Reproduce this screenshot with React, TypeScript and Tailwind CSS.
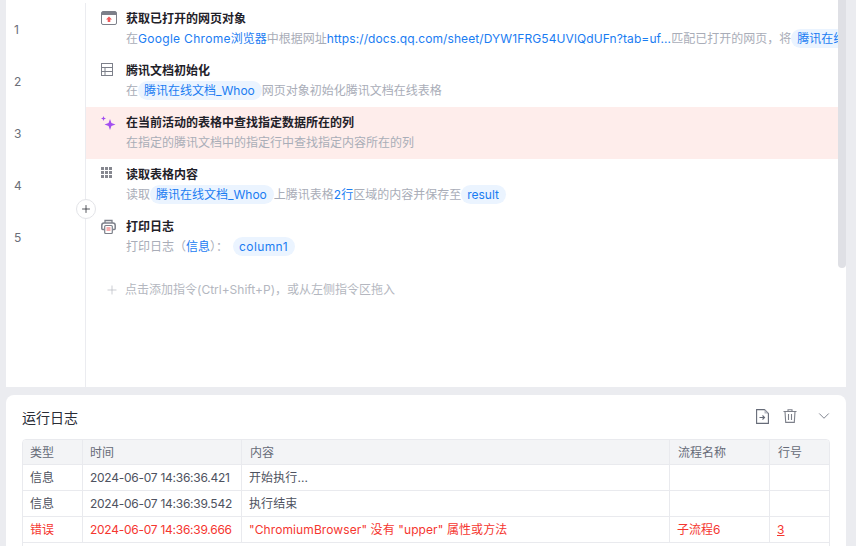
import { ChevronDownIcon, PlusIcon } from "lucide-react";

const FONT = "font-['Inter','Noto_Sans_CJK_SC',sans-serif]";

function Chip({ children }: { children: React.ReactNode }) {
  return <span className="inline-block h-[19px] shrink-0 rounded-[10px] bg-[#ebf4ff] pl-1.5 pr-[7px] leading-[19px] text-[#1a7cf2]">{children}</span>;
}

function Blue({ children }: { children: React.ReactNode }) {
  return <span className="text-[#1a7cf2]">{children}</span>;
}

function WebIcon() {
  return (
    <svg width="16" height="14" viewBox="0 0 16 14">
      <rect x="0.5" y="0.5" width="15" height="13" rx="1.5" fill="#fff" stroke="#7d808a" />
      <rect x="1" y="1" width="14" height="3" fill="#7d808a" />
      <path d="M8 5.500l3 3H9.300v2.500H6.700V8.500H5z" fill="#f0595b" />
    </svg>
  );
}

function SheetIcon() {
  return (
    <svg width="12" height="13" viewBox="0 0 12 13" fill="none" stroke="#7d808a">
      <rect x="0.500" y="0.500" width="11" height="12" />
      <path d="M.5 4.500h11M.5 8.500h11M4 4.500v8" />
    </svg>
  );
}

function SparkIcon() {
  return (
    <svg width="15" height="16" viewBox="0 0 15 16" fill="#a34ff0">
      <path d="M9 4l1.400 4.100L14.500 9.500l-4.100 1.400L9 15l-1.400-4.100L3.500 9.500l4.100-1.400z" />
      <path d="M2.500 1l.7 1.800L5 3.500l-1.800.7L2.500 6l-.7-1.800L0 3.500l1.800-.7z" />
    </svg>
  );
}

function GridIcon() {
  return (
    <svg width="11" height="11" viewBox="0 0 11 11" fill="#85878f">
      {[0, 4, 8].flatMap((y) => [0, 4, 8].map((x) => <rect key={`${x}-${y}`} x={x} y={y} width="3" height="3" />))}
    </svg>
  );
}

function PrintIcon() {
  return (
    <svg width="15" height="15" viewBox="0 0 15 15" fill="none">
      <path d="M4 4V1.500h7V4" stroke="#7d808a" strokeWidth="1.300" />
      <path d="M3.500 10.500H1.800C1.200 10.500.8 10 .8 9.500V6.500C.8 5 2 4 3 4h9c1 0 2.200 1 2.200 2.500v3c0 .5-.4 1-1 1h-1.700" stroke="#7d808a" strokeWidth="1.500" />
      <rect x="3.700" y="6.500" width="7.600" height="8" rx="1" fill="#fff" stroke="#7d808a" strokeWidth="1.200" />
      <path d="M5.500 9h4M5.500 11h4" stroke="#f0595b" />
    </svg>
  );
}

function ExportIcon() {
  return (
    <svg width="13" height="15" viewBox="0 0 13 15" fill="none" stroke="#666b78" strokeWidth="1.100">
      <path d="M8.500 .6H.6v13.800h11.800V4.500z" />
      <path d="M8.500 .6v3.900h3.900z" fill="#b8bbc4" stroke="none" />
      <path d="M3.500 8.500h5M6.500 6.500l2 2-2 2" />
    </svg>
  );
}

function BinIcon() {
  return (
    <svg width="14" height="14" viewBox="0 0 14 14" fill="none" stroke="#7d808a" strokeWidth="1.100">
      <path d="M.5 2.500h13M5 2.500V.8h4v1.700" />
      <path d="M2 2.500l.7 10.900h8.600L12 2.500" />
      <path d="M5.500 5v6M8.500 5v6" />
    </svg>
  );
}

const steps = [
  {
    no: 1,
    icon: <WebIcon />,
    title: "获取已打开的网页对象",
    desc: (
      <>
        在<Blue><span className="tracking-[0.3px]">Google Chrome</span>浏览器</Blue>中根据网址<Blue><span className="tracking-[0.1px]">https://docs.qq.com/sheet/DYW1FRG54UVlQdUFn?tab=uf...</span></Blue>匹配已打开的网页，将<Chip>腾讯在线文档_Whoo</Chip>
      </>
    ),
  },
  {
    no: 2,
    icon: <SheetIcon />,
    title: "腾讯文档初始化",
    desc: (
      <>
        在<Chip>腾讯在线文档_Whoo</Chip>网页对象初始化腾讯文档在线表格
      </>
    ),
  },
  { no: 3, icon: <SparkIcon />, title: "在当前活动的表格中查找指定数据所在的列", desc: <>在指定的腾讯文档中的指定行中查找指定内容所在的列</>, error: true },
  {
    no: 4,
    icon: <GridIcon />,
    title: "读取表格内容",
    desc: (
      <>
        读取<Chip>腾讯在线文档_Whoo</Chip>上腾讯表格<Blue>2行</Blue>区域的内容并保存至<Chip>result</Chip>
      </>
    ),
  },
  {
    no: 5,
    icon: <PrintIcon />,
    title: "打印日志",
    desc: (
      <>
        打印日志（<Blue>信息</Blue>）：<span className="ml-[5px]" /><Chip><span className="tracking-[0.4px]">column1</span></Chip>
      </>
    ),
  },
];

const logs = [
  { type: "信息", time: "2024-06-07 14:36:36.421", text: "开始执行...", flow: "", line: "" },
  { type: "信息", time: "2024-06-07 14:36:39.542", text: "执行结束", flow: "", line: "" },
  { type: "错误", time: "2024-06-07 14:36:39.666", text: '"ChromiumBrowser" 没有 "upper" 属性或方法', flow: "子流程6", line: "3", error: true },
];

export default function App() {
  return (
    <main className={`relative flex h-[546px] w-[856px] flex-col overflow-hidden bg-[#ebecf0] pl-1.5 pr-2.5 text-[12px] ${FONT}`}>
      <section className="flex h-[387px] shrink-0 overflow-hidden bg-white pr-2">
        <div className="flex min-w-0 flex-1 pt-[3px]">
          <div className="w-20 shrink-0 border-r border-[#ebecf0] pl-2 text-[#6b6e78]">
            {steps.map((s) => (
              <div key={s.no} className="flex h-[52px] items-center pt-0.5">
                {s.no}
              </div>
            ))}
          </div>
          <div className="relative min-w-0 flex-1">
            {steps.map((s) => (
              <div key={s.no} className={`flex h-[52px] overflow-hidden pl-3.5 ${s.error ? "bg-[#feedeb]" : ""}`}>
                <div className="flex w-[26px] shrink-0 items-start pl-px pt-2">{s.icon}</div>
                <div className="min-w-0 pt-1.5">
                  <div className="h-[19px] whitespace-nowrap font-bold leading-5 text-[#1f2129]">{s.title}</div>
                  <div className="h-[21px] whitespace-nowrap leading-[21px] text-[#a9adb8]">{s.desc}</div>
                </div>
              </div>
            ))}
            <div className="flex h-[54px] items-center pl-[19px] text-[#b4b7c0]">
              <PlusIcon className="mr-1.5 size-3.5" strokeWidth={1.200} />
              点击添加指令(Ctrl+Shift+P)，或从左侧指令区拖入
            </div>
            <div className="absolute left-[-10px] top-[196px] flex size-5 items-center justify-center rounded-full border border-[#e3e4e8] bg-white text-[#1f2129]">
              <PlusIcon className="size-3" strokeWidth={1.500} />
            </div>
          </div>
        </div>
      </section>
      <div className="absolute left-[838px] top-0 h-[268px] w-2 rounded-b-sm bg-[#dfe0e5]" />

      <section className="mt-2 flex-1 rounded-t-lg bg-white px-4 pt-[5px]">
        <div className="flex h-8 items-center justify-between">
          <h2 className="pt-0.5 text-[14px] text-[#2a2d36]">运行日志</h2>
          <div className="flex items-center text-[#666b78]">
            <ExportIcon />
            <div className="ml-3.5">
              <BinIcon />
            </div>
            <ChevronDownIcon className="ml-[18px] mr-[-3px] size-[18px]" strokeWidth={1.100} />
          </div>
        </div>
        <div className="mt-[7px] w-[808px] overflow-hidden rounded-t border border-[#e9eaee] text-[#4e5260]">
          <div className="grid h-6 grid-cols-[60px_159px_428px_100px_1fr] items-center bg-[#f3f4f6] text-[#666b78]">
            {["类型", "时间", "内容", "流程名称", "行号"].map((h) => (
              <div key={h} className="flex h-full items-center border-r border-[#e9eaee] pl-[7px] pt-0.5 last:border-r-0 [&:nth-child(n+3)]:pl-2">
                {h}
              </div>
            ))}
          </div>
          {logs.map((l) => (
            <div key={l.time} className={`grid h-[26px] grid-cols-[60px_159px_428px_100px_1fr] border-t border-[#e9eaee] ${l.error ? "text-[#f5362f]" : ""}`}>
              <div className="flex items-center border-r border-[#e9eaee] pl-[7px]">{l.type}</div>
              <div className="flex items-center border-r border-[#e9eaee] pl-[7px] tracking-[-0.26px]">{l.time}</div>
              <div className="flex items-center border-r border-[#e9eaee] pl-[7px] tracking-[0.1px]">{l.text}</div>
              <div className="flex items-center border-r border-[#e9eaee] pl-[7px]">{l.flow}</div>
              <div className="flex items-center pl-[7px] underline">{l.line}</div>
            </div>
          ))}
          <div className="h-[26px] border-t border-[#e9eaee]" />
        </div>
      </section>
    </main>
  );
}
